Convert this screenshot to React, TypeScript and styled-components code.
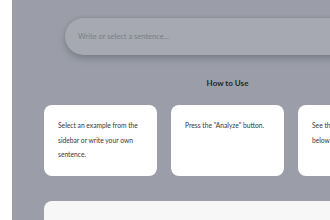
import styled, { createGlobalStyle } from 'styled-components';

const GlobalStyle = createGlobalStyle`
  html, body {
    margin: 0;
    padding: 0;
    overflow: hidden;
    background: #ffffff;
  }
  * {
    box-sizing: border-box;
  }
`;

const Page = styled.div`
  display: flex;
  width: 330px;
  height: 220px;
  overflow: hidden;
  font-family: 'Lato', 'Liberation Sans', sans-serif;
`;

const Sidebar = styled.aside`
  flex: 0 0 12px;
  background: #ffffff;
`;

const Main = styled.main`
  flex: 0 0 auto;
  width: 430px;
  background: #9b9ea8;
  padding: 18px 0 0 32px;
`;

const Content = styled.div`
  width: 367px;
  display: flex;
  flex-direction: column;
`;

const InputPill = styled.div`
  margin: 0 21px;
  height: 37px;
  border-radius: 19px;
  background: #a6a9b1;
  display: flex;
  align-items: center;
  padding-left: 13px;
  box-shadow: 0 4px 6px rgba(70, 74, 86, 0.35), 0 -1px 3px rgba(70, 74, 86, 0.15);
  font-size: 7.5px;
  color: #7a7d86;
`;

const Heading = styled.h3`
  margin: 20px 0 0;
  height: 16px;
  text-align: center;
  font-size: 8px;
  font-weight: 700;
  color: #23262e;
  line-height: 16px;
`;

const CardRow = styled.div`
  margin-top: 14px;
  display: grid;
  grid-template-columns: repeat(3, 113px);
  gap: 14px;
`;

const Card = styled.div`
  height: 71px;
  background: #ffffff;
  border-radius: 8px;
  padding: 13px 14px 0;
  font-size: 6.7px;
  line-height: 14.5px;
  color: #34373f;
`;

const ResultPanel = styled.div`
  margin-top: 25px;
  height: 40px;
  background: #f7f7f8;
  border-radius: 8px 0 0 0;
  width: 400px;
`;

const steps = [
  'Select an example from the sidebar or write your own sentence.',
  'Press the "Analyze" button.',
  'See the results in the panel below.',
];

const App = () => {
  return (
    <Page>
      <GlobalStyle />
      <Sidebar />
      <Main>
        <Content>
          <InputPill>Write or select a sentence...</InputPill>
          <Heading>How to Use</Heading>
          <CardRow>
            {steps.map((s) => (
              <Card key={s}>{s}</Card>
            ))}
          </CardRow>
          <ResultPanel />
        </Content>
      </Main>
    </Page>
  );
};

export default App;
